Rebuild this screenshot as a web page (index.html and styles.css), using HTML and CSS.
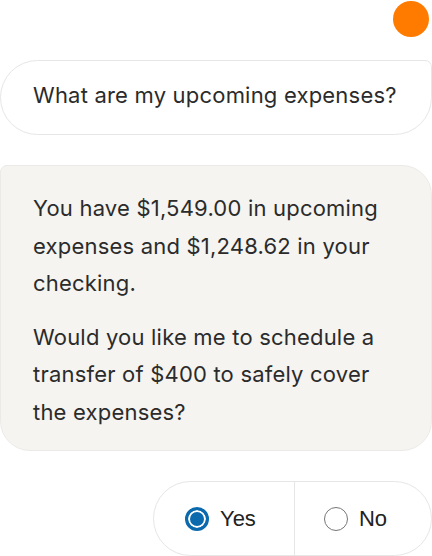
FILE: index.html
```html
<!DOCTYPE html>
<html lang="en">
<head>
    <meta charset="UTF-8">
    <meta name="viewport" content="width=device-width, initial-scale=1.0">
    <title>Assistant</title>
    <link rel="stylesheet" href="styles.css">
</head>
<body>
    <div class="chat">
        <div class="avatar"></div>

        <div class="bubble user">What are my upcoming expenses?</div>

        <div class="bubble bot">
            <p>You have $1,549.00 in upcoming expenses and $1,248.62 in your checking.</p>
            <p>Would you like me to schedule a transfer of $400 to safely cover the expenses?</p>
        </div>

        <div class="choices">
            <label class="choice">
                <input type="radio" name="answer" value="yes" checked>
                <span class="radio"></span>
                <span>Yes</span>
            </label>
            <label class="choice">
                <input type="radio" name="answer" value="no">
                <span class="radio"></span>
                <span>No</span>
            </label>
        </div>
    </div>
</body>
</html>
```

FILE: styles.css
```css
body {
    margin: 0;
    padding: 0;
    background: #ffffff;
    font-family: 'Inter', 'Liberation Sans', sans-serif;
    color: #2b2b2b;
}

.chat {
    display: flex;
    flex-direction: column;
    align-items: flex-end;
    width: 432px;
}

.avatar {
    width: 36px;
    height: 36px;
    margin: 1px 3px 0 0;
    border-radius: 50%;
    background: #ff7b00;
}

.bubble {
    box-sizing: border-box;
    width: 100%;
    font-size: 22px;
    letter-spacing: 0.2px;
}

.user {
    margin-top: 23px;
    height: 75px;
    padding: 0 30px 5px 32px;
    display: flex;
    align-items: center;
    border: 1.5px solid #e6e6e6;
    border-radius: 38px 7px 38px 38px;
}

.bot {
    margin-top: 30px;
    padding: 24px 28px 19px 32px;
    background: #f5f4f1;
    border: 1px solid #ebeae7;
    border-radius: 7px 30px 30px 30px;
    line-height: 37.5px;
}

.bot p {
    margin: 0 0 16px;
}

.bot p:last-child {
    margin-bottom: 0;
}

.choices {
    margin-top: 30px;
    display: flex;
    height: 75px;
    box-sizing: border-box;
    border: 1.5px solid #e6e6e6;
    border-radius: 38px;
    font-family: 'Liberation Sans', Arial, sans-serif;
    font-size: 22px;
    color: #222222;
}

.choice {
    display: flex;
    align-items: center;
    gap: 11px;
    padding: 0 38px 0 31px;
    cursor: pointer;
}

.choice + .choice {
    border-left: 1.5px solid #e6e6e6;
    padding: 0 44px 0 29px;
}

.choice input {
    display: none;
}

.radio {
    box-sizing: border-box;
    width: 24px;
    height: 24px;
    border: 1.5px solid #767676;
    border-radius: 50%;
    background: #ffffff;
}

.choice input:checked + .radio {
    border: 3px solid #0b6aad;
    box-shadow: inset 0 0 0 2px #ffffff;
    background: #0b6aad;
}
```
